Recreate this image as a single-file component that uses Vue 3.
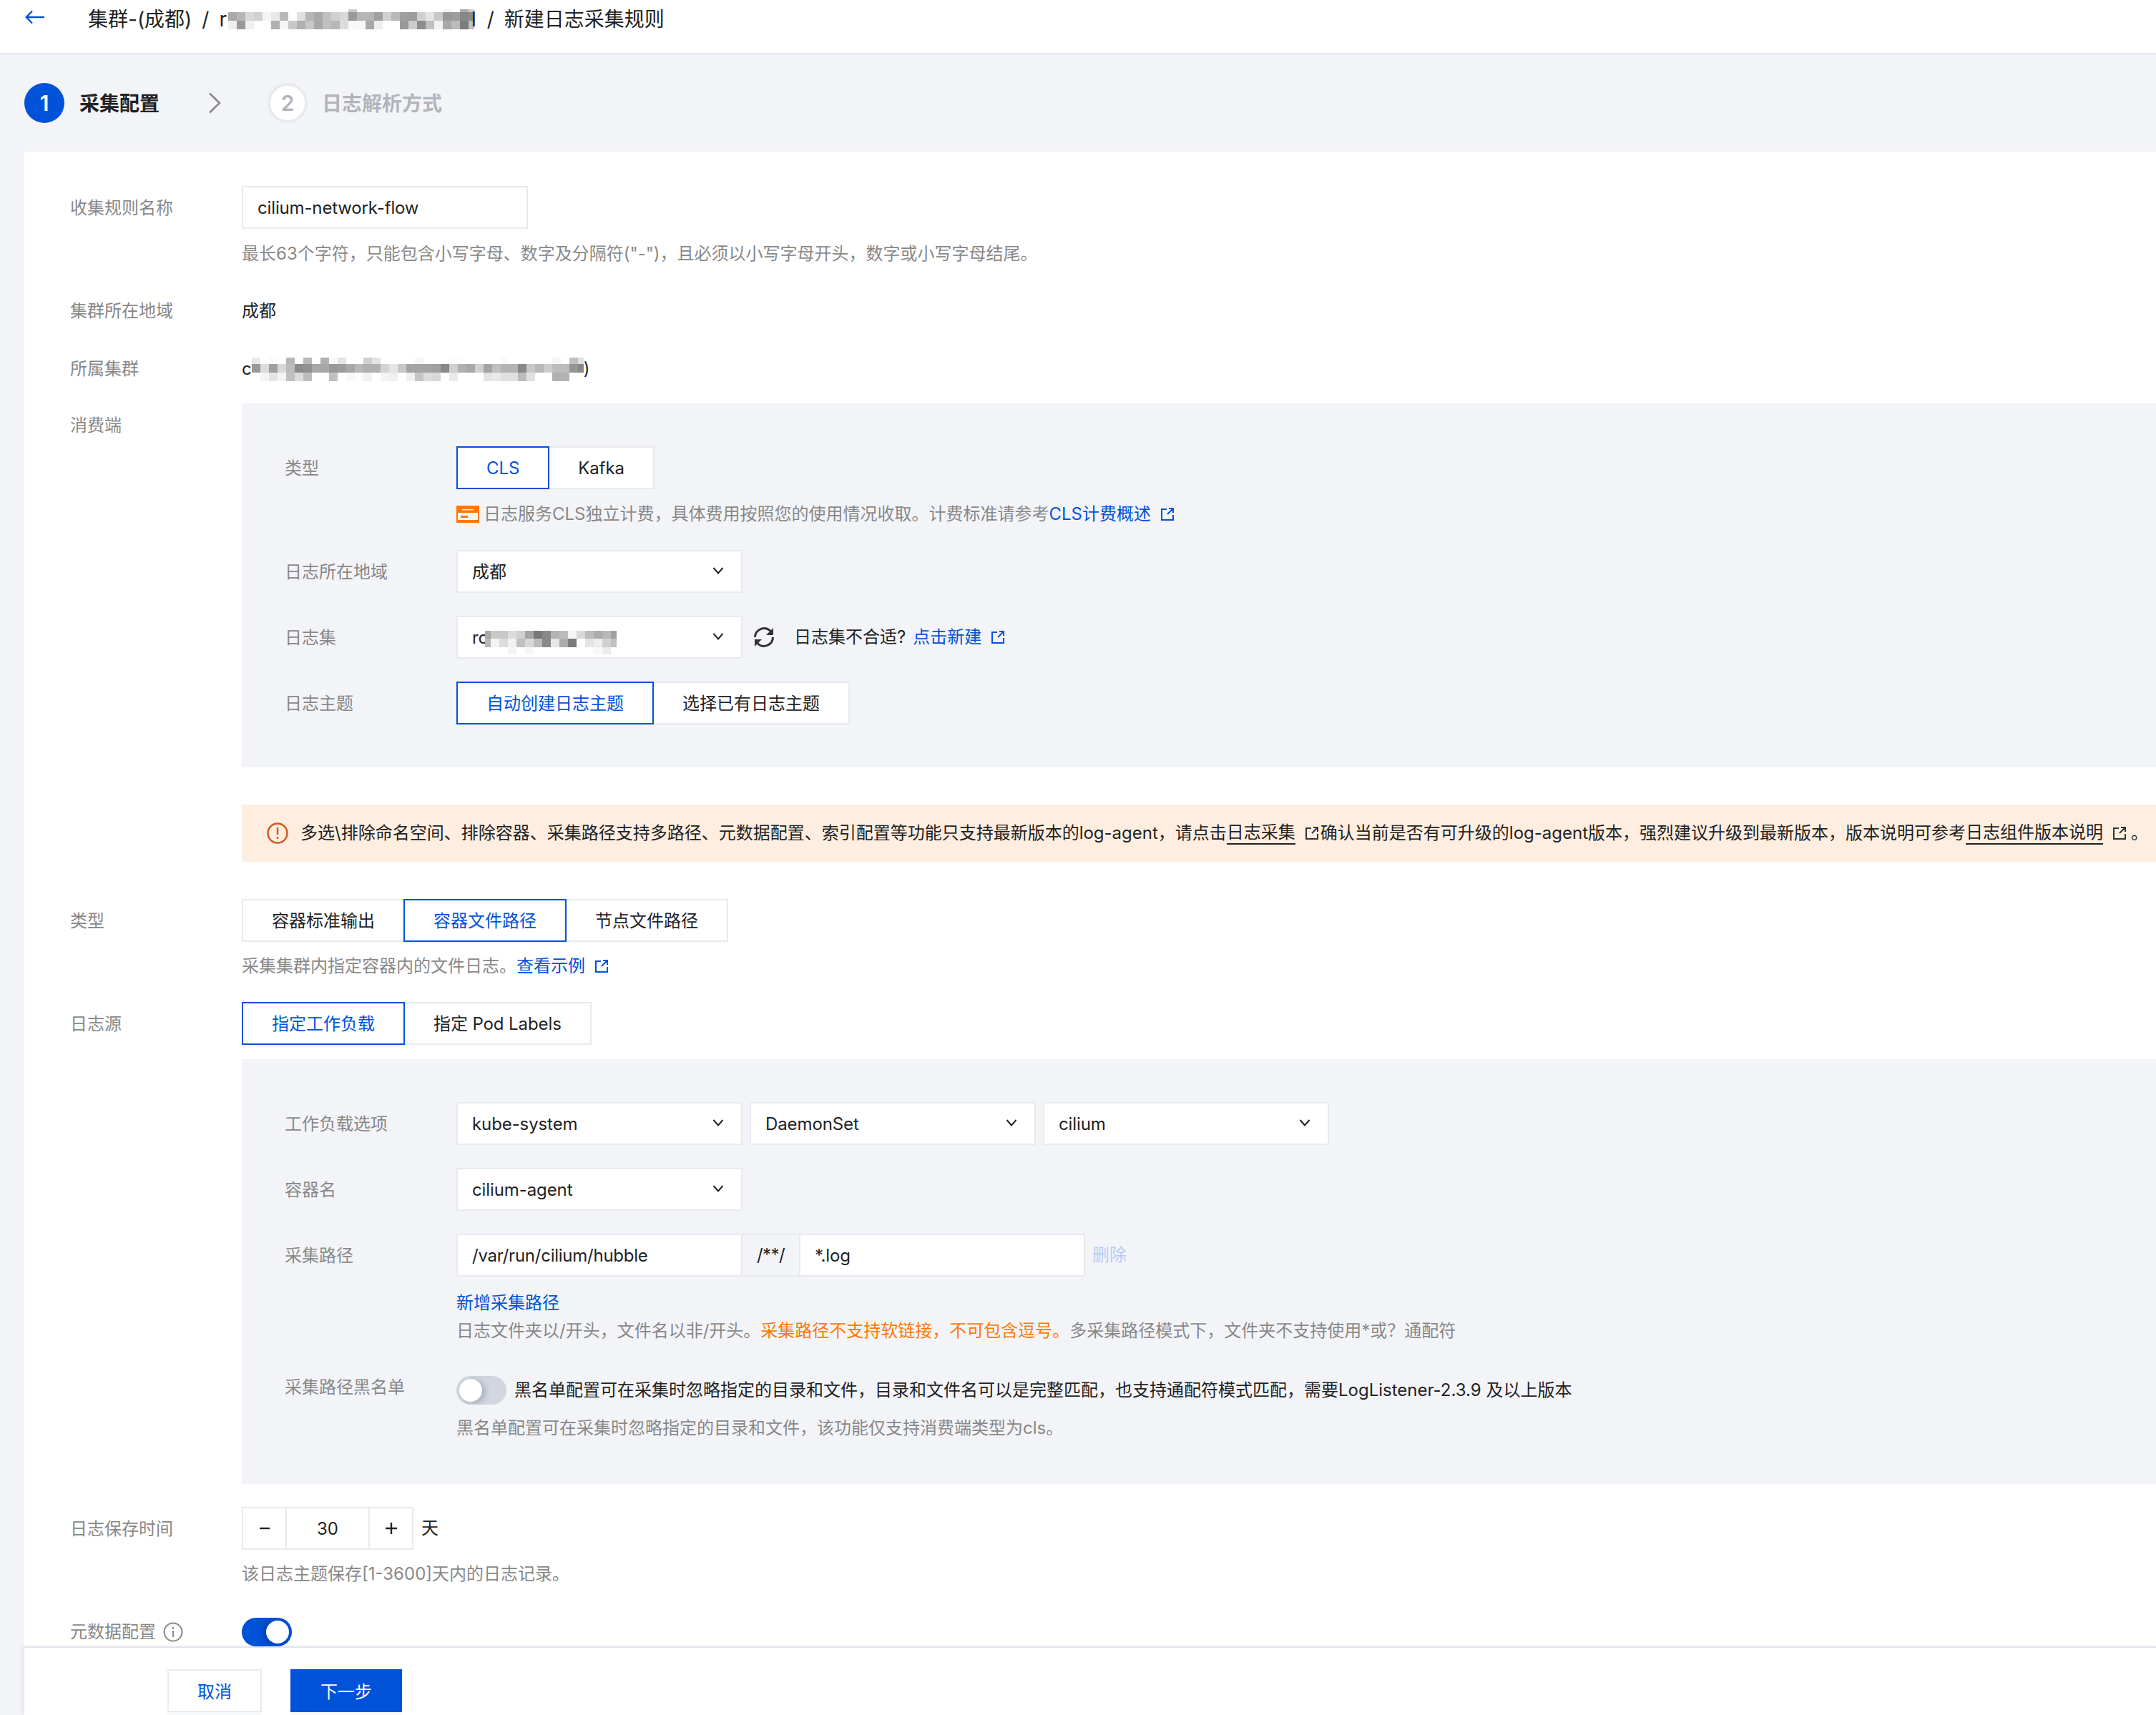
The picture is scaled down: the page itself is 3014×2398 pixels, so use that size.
<script setup>
function build(rows, cell) {
  const out = []
  let y = 0
  rows.forEach((r) => {
    r.v.split(' ').forEach((g, i) => {
      if (g !== 'ff') out.push({ x: i * cell + (r.x || 0), y, w: cell, h: r.h, fill: '#' + g + g + g })
    })
    y += r.h
  })
  return out
}
const headMosaic = build([
  { h: 4, v: 'ff ff ff ff ff ff ff ff ff ff ff ff ff ff c8 ff ff ff ff ff ff ff ff ff ff f4 ff aa cc' },
  { h: 12, v: 'aa b5 d8 d0 f5 e8 b8 ff e0 b5 a8 c0 d0 d8 99 b5 b5 a0 d0 b8 a0 9c d0 e4 c8 99 9c 88 8a' },
  { h: 12, v: 'ee 99 f0 ff ff b0 f5 c8 b0 c8 a8 c0 b8 dc f8 f8 a8 ee ff ff 99 cc 8c c0 f2 a8 bc 7c c0' }
], 12)
const clusterMosaic = build([
  { h: 9, v: 'e8 ff fa ff b8 ff b8 ff b0 fa e4 ff ff d0 e4 ff ff ff ff f6 ff ff ff fc fc ff ff ff ff fa ff ff ff ff ff f4 ff c0 e0' },
  { h: 12, v: '99 dc a0 d8 bc 8c 90 a8 a8 98 9c a8 b8 b0 b0 d4 e4 c8 a4 a4 a4 a0 88 d0 b0 a8 d0 a4 c0 b4 b4 88 c8 b8 cc bc bc 94 88' },
  { h: 12, v: 'ff f4 e4 f4 c0 dc bc ff ff c0 ff f8 fc f2 ff f4 f0 ff f0 c4 dc d8 ff ea ff ff ff e4 e8 e0 e0 bc e0 ff ff b0 b4 ff ff' }
], 12)
const setMosaic = build([
  { h: 11, x: -4, v: 'a8 c8 c8 dc d0 a4 78 88 b4 bc f4 d8 bc ac b8 a0' },
  { h: 12, x: -4, v: 'b8 f4 dc f2 c0 d8 bc 88 e8 ac 7c ff e4 ee d0 c0' },
  { h: 10, x: -4, v: 'ff ff ff f4 ff f6 ff ff ff ff ff ff ff f8 ec ff' }
], 12)
</script>

<template>
  <div class="page">
    <div class="main">
      <header class="topbar">
        <svg class="back" width="28" height="20" viewBox="0 0 28 20" fill="none" stroke="#0052d9" stroke-width="2.4">
          <path d="M27 10H2M10 1.5 1.8 10l8.2 8.5" />
        </svg>
        <nav class="crumbs">
          <span>集群-(成都)</span>
          <span class="sep">/</span>
          <span class="crumb-r">r</span>
          <svg class="mosaic" width="344" height="28" viewBox="0 0 344 28">
            <rect v-for="(c, i) in headMosaic" :key="i" :x="c.x" :y="c.y" :width="c.w" :height="c.h" :fill="c.fill" />
          </svg>
          <span class="tail">l</span>
          <span class="sep sep2">/</span>
          <span>新建日志采集规则</span>
        </nav>
      </header>

      <div class="steps">
        <div class="dot dot-on">1</div>
        <div class="step-name">采集配置</div>
        <svg class="step-arrow" width="18" height="30" viewBox="0 0 18 30" fill="none" stroke="#888" stroke-width="2.6">
          <path d="M2 1.5 16 15 2 28.5" />
        </svg>
        <div class="dot dot-off">2</div>
        <div class="step-name step-name-off">日志解析方式</div>
      </div>

      <section class="card">
        <div class="row">
          <div class="label">收集规则名称</div>
          <div class="field">
            <div class="input wide">cilium-network-flow</div>
            <div class="help h-first">最长63个字符，只能包含小写字母、数字及分隔符("-")，且必须以小写字母开头，数字或小写字母结尾。</div>
          </div>
        </div>

        <div class="row row-text m44">
          <div class="label">集群所在地域</div>
          <div class="field">成都</div>
        </div>

        <div class="row row-text m45">
          <div class="label">所属集群</div>
          <div class="field inline">
            <span>c</span>
            <svg class="mosaic" width="464" height="33" viewBox="0 0 464 33">
              <rect v-for="(c, i) in clusterMosaic" :key="i" :x="c.x" :y="c.y" :width="c.w" :height="c.h" :fill="c.fill" />
            </svg>
            <span>)</span>
          </div>
        </div>

        <div class="row m30">
          <div class="label">消费端</div>
          <div class="field">
            <div class="panel">
              <div class="row">
                <div class="label">类型</div>
                <div class="field">
                  <div class="seg">
                    <div class="seg-btn on latin">CLS</div>
                    <div class="seg-btn latin">Kafka</div>
                  </div>
                  <div class="help h-bill inline">
                    <svg class="bill" width="32" height="24" viewBox="0 0 32 24">
                      <rect width="32" height="24" fill="#ff7800" />
                      <rect x="8" y="5" width="16" height="1.4" fill="#f3f4f8" />
                      <rect x="2" y="10" width="28" height="10" fill="#f3f4f8" />
                      <rect x="6" y="14" width="10" height="3" fill="#ff7800" />
                    </svg>
                    <span>日志服务CLS独立计费，具体费用按照您的使用情况收取。计费标准请参考</span>
                    <a class="link">CLS计费概述</a>
                    <svg class="ext" width="18" height="18" viewBox="0 0 18 18" fill="none" stroke="#0052d9" stroke-width="2">
                      <path d="M8 2H1v15h16v-7M9 9l7-7M11 1h6v6" />
                    </svg>
                  </div>
                </div>
              </div>
              <div class="row m32">
                <div class="label">日志所在地域</div>
                <div class="select">
                  <span>成都</span>
                  <svg class="chev" width="16" height="10" viewBox="0 0 16 10" fill="none" stroke="#222" stroke-width="2"><path d="M1.5 1 8 8.5 14.5 1" /></svg>
                </div>
              </div>
              <div class="row m32">
                <div class="label">日志集</div>
                <div class="field inline">
                  <div class="select">
                    <span class="set-name">
                      <span class="set-head">rc</span>
                      <svg class="mosaic set" width="184" height="33" viewBox="0 0 184 33">
                        <rect v-for="(c, i) in setMosaic" :key="i" :x="c.x" :y="c.y" :width="c.w" :height="c.h" :fill="c.fill" />
                      </svg>
                    </span>
                    <svg class="chev" width="16" height="10" viewBox="0 0 16 10" fill="none" stroke="#222" stroke-width="2"><path d="M1.5 1 8 8.5 14.5 1" /></svg>
                  </div>
                  <svg class="refresh" width="30" height="30" viewBox="0 0 30 30" fill="none" stroke="#333" stroke-width="3">
                    <path d="M2.500 15A12.500 12.500 0 0 1 24 6.500" />
                    <path d="M27.500 15A12.500 12.500 0 0 1 6 23.500" />
                    <path d="M28 2v10H18z" fill="#333" stroke="none" />
                    <path d="M2 28V18h10z" fill="#333" stroke="none" />
                  </svg>
                  <span class="not-fit">日志集不合适?</span>
                  <a class="link fit-link">点击新建</a>
                  <svg class="ext" width="18" height="18" viewBox="0 0 18 18" fill="none" stroke="#0052d9" stroke-width="2">
                    <path d="M8 2H1v15h16v-7M9 9l7-7M11 1h6v6" />
                  </svg>
                </div>
              </div>
              <div class="row m32">
                <div class="label">日志主题</div>
                <div class="seg">
                  <div class="seg-btn on">自动创建日志主题</div>
                  <div class="seg-btn">选择已有日志主题</div>
                </div>
              </div>
            </div>

            <div class="banner">
              <svg class="warn" width="30" height="30" viewBox="0 0 30 30" fill="none" stroke="#d4561c" stroke-width="2.4">
                <circle cx="15" cy="15" r="13.500" />
                <path d="M15 7v10M15 20v3" />
              </svg>
              <span>多选\排除命名空间、排除容器、采集路径支持多路径、元数据配置、索引配置等功能只支持最新版本的log-agent，请点击</span>
              <a class="under">日志采集</a>
              <svg class="ext-dark" width="18" height="18" viewBox="0 0 18 18" fill="none" stroke="#333" stroke-width="2">
                <path d="M8 2H1v15h16v-7M9 9l7-7M11 1h6v6" />
              </svg>
              <span>确认当前是否有可升级的log-agent版本，强烈建议升级到最新版本，版本说明可参考</span>
              <a class="under">日志组件版本说明</a>
              <svg class="ext-dark" width="18" height="18" viewBox="0 0 18 18" fill="none" stroke="#333" stroke-width="2">
                <path d="M8 2H1v15h16v-7M9 9l7-7M11 1h6v6" />
              </svg>
              <span class="stop">。</span>
            </div>
          </div>
        </div>

        <div class="row m52">
          <div class="label">类型</div>
          <div class="field">
            <div class="seg">
              <div class="seg-btn">容器标准输出</div>
              <div class="seg-btn on">容器文件路径</div>
              <div class="seg-btn">节点文件路径</div>
            </div>
            <div class="help h-note inline">
              <span>采集集群内指定容器内的文件日志。</span>
              <a class="link">查看示例</a>
              <svg class="ext" width="18" height="18" viewBox="0 0 18 18" fill="none" stroke="#0052d9" stroke-width="2">
                <path d="M8 2H1v15h16v-7M9 9l7-7M11 1h6v6" />
              </svg>
            </div>
          </div>
        </div>

        <div class="row m32">
          <div class="label">日志源</div>
          <div class="field">
            <div class="seg">
              <div class="seg-btn on">指定工作负载</div>
              <div class="seg-btn latin">指定 Pod Labels</div>
            </div>
            <div class="panel p2">
              <div class="row">
                <div class="label">工作负载选项</div>
                <div class="inline g10">
                  <div class="select">
                    <span>kube-system</span>
                    <svg class="chev" width="16" height="10" viewBox="0 0 16 10" fill="none" stroke="#222" stroke-width="2"><path d="M1.5 1 8 8.5 14.5 1" /></svg>
                  </div>
                  <div class="select">
                    <span>DaemonSet</span>
                    <svg class="chev" width="16" height="10" viewBox="0 0 16 10" fill="none" stroke="#222" stroke-width="2"><path d="M1.5 1 8 8.5 14.5 1" /></svg>
                  </div>
                  <div class="select">
                    <span>cilium</span>
                    <svg class="chev" width="16" height="10" viewBox="0 0 16 10" fill="none" stroke="#222" stroke-width="2"><path d="M1.5 1 8 8.5 14.5 1" /></svg>
                  </div>
                </div>
              </div>
              <div class="row m32">
                <div class="label">容器名</div>
                <div class="select">
                  <span>cilium-agent</span>
                  <svg class="chev" width="16" height="10" viewBox="0 0 16 10" fill="none" stroke="#222" stroke-width="2"><path d="M1.5 1 8 8.5 14.5 1" /></svg>
                </div>
              </div>
              <div class="row m32">
                <div class="label">采集路径</div>
                <div class="field">
                  <div class="inline">
                    <div class="input wide path">/var/run/cilium/hubble</div>
                    <div class="addon">/**/</div>
                    <div class="input wide">*.log</div>
                    <span class="del">删除</span>
                  </div>
                  <div class="add"><a class="link">新增采集路径</a></div>
                  <div class="help h-tight">日志文件夹以/开头，文件名以非/开头。<span class="warn-text">采集路径不支持软链接，不可包含逗号。</span>多采集路径模式下，文件夹不支持使用*或？通配符</div>
                </div>
              </div>
              <div class="row m44">
                <div class="label lbl-plain">采集路径黑名单</div>
                <div class="field">
                  <div class="inline sw-row">
                    <div class="switch"><i class="knob"></i></div>
                    <span class="sw-text">黑名单配置可在采集时忽略指定的目录和文件，目录和文件名可以是完整匹配，也支持通配符模式匹配，需要LogListener-2.3.9 及以上版本</span>
                  </div>
                  <div class="help h-sw">黑名单配置可在采集时忽略指定的目录和文件，该功能仅支持消费端类型为cls。</div>
                </div>
              </div>
            </div>
          </div>
        </div>

        <div class="row m32">
          <div class="label">日志保存时间</div>
          <div class="field">
            <div class="inline">
              <div class="stepper">
                <div class="st-btn">
                  <svg width="16" height="16" viewBox="0 0 16 16" stroke="#222" stroke-width="2.400"><path d="M1 8h14" /></svg>
                </div>
                <div class="st-val">30</div>
                <div class="st-btn">
                  <svg width="16" height="16" viewBox="0 0 16 16" stroke="#222" stroke-width="2.400"><path d="M0 8h16M8 0v16" /></svg>
                </div>
              </div>
              <span class="unit">天</span>
            </div>
            <div class="help h-note">该日志主题保存[1-3600]天内的日志记录。</div>
          </div>
        </div>

        <div class="row row-meta">
          <div class="label inline">
            <span>元数据配置</span>
            <svg class="info" width="28" height="28" viewBox="0 0 28 28" fill="none" stroke="#888" stroke-width="2">
              <circle cx="14" cy="14" r="12.500" />
              <path d="M14 12v9M14 7v3" />
            </svg>
          </div>
          <div class="switch switch-on"><i class="knob"></i></div>
        </div>
      </section>
    </div>

    <footer class="footer">
      <button class="btn btn-ghost">取消</button>
      <button class="btn btn-primary">下一步</button>
    </footer>
  </div>
</template>

<style>
html, body { margin: 0; background: #f3f4f8; }
</style>

<style scoped>
.page {
  width: 3014px;
  height: 2398px;
  display: flex;
  flex-direction: column;
  overflow: hidden;
  background: #f3f4f8;
  color: #222;
  font-family: Inter, "Noto Sans CJK SC", sans-serif;
  font-size: 24px;
  line-height: 36px;
}
.main { flex: 1; min-height: 0; overflow: hidden; }
.topbar {
  height: 74px;
  background: #fff;
  border-bottom: 2px solid #e8eaef;
  display: flex;
  align-items: flex-start;
  padding-left: 35px;
}
.back { margin-top: 14px; flex: none; }
.crumbs {
  display: flex;
  align-items: center;
  height: 54px;
  margin-left: 60px;
  font-size: 28px;
  line-height: 54px;
  color: #222;
}
.sep { margin: 0 14px; }
.sep2 { margin: 0 14px 0 15px; }
.crumb-r { margin-right: 2px; }
.mosaic { display: block; flex: none; }
.tail { margin-left: -4px; }

.steps {
  height: 136px;
  display: flex;
  align-items: center;
  padding-left: 34px;
}
.dot {
  width: 56px;
  height: 56px;
  box-sizing: border-box;
  border-radius: 50%;
  display: flex;
  align-items: center;
  justify-content: center;
  font-size: 30px;
  font-weight: 600;
}
.dot-on { background: #0052d9; color: #fff; }
.dot-off { background: #fff; border: 4px solid #e8eaf0; color: #b2b5bb; margin-left: 65px; }
.step-name { font-size: 28px; font-weight: 700; color: #222; margin-left: 21px; padding-top: 2px; }
.step-name-off { color: #b2b5bb; margin-left: 20px; }
.step-arrow { margin-left: 68px; }

.card { background: #fff; margin-left: 34px; padding: 48px 0 60px 64px; }
.row { display: flex; align-items: flex-start; }
.label { width: 240px; height: 60px; flex: none; line-height: 62px; color: #888; }
.field { flex: 1; min-width: 0; }
.inline { display: flex; align-items: center; }
.row-text .label { line-height: 36px; height: 36px; }
.row-text .field { height: 36px; }
.lbl-plain { line-height: 36px; height: 36px; margin-top: -1px; }
.m30 { margin-top: 30px; }
.m32 { margin-top: 32px; }
.m44 { margin-top: 44px; }
.m45 { margin-top: 45px; }
.m52 { margin-top: 52px; }
.g10 { gap: 10px; }

.input {
  height: 60px;
  box-sizing: border-box;
  background: #fff;
  border: 2px solid #e8eaf0;
  padding: 0 20px;
  line-height: 58px;
  white-space: nowrap;
  letter-spacing: -0.15px;
}
.path { letter-spacing: -0.25px; }
.wide { width: 400px; flex: none; }
.addon {
  width: 79px;
  height: 60px;
  box-sizing: border-box;
  padding-left: 20px;
  border-top: 2px solid #e8eaf0;
  border-bottom: 2px solid #e8eaf0;
  line-height: 56px;
  flex: none;
  letter-spacing: -0.6px;
}
.del { color: #b5cdf5; margin-left: 10px; }
.help { color: #888; white-space: nowrap; }
.h-first { margin-top: 17px; }
.h-note { margin-top: 16px; }
.h-bill { margin-top: 17px; }
.h-tight { margin-top: 3px; }
.h-sw { margin-top: 15px; }
.add { margin-top: 19px; }
.link { color: #0052d9; text-decoration: none; }
.ext { margin-left: 14px; flex: none; }
.bill { margin-right: 6px; flex: none; }
.warn-text { color: #ff7800; }

.panel { background: #f3f4f8; padding: 60px 0 60px 60px; }
.p2 { margin-top: 20px; }

.seg { display: flex; }
.seg-btn {
  height: 60px;
  box-sizing: border-box;
  padding: 0 40px;
  margin-left: -2px;
  background: #fff;
  border: 2px solid #e8eaf0;
  line-height: 58px;
  white-space: nowrap;
}
.seg-btn.latin { letter-spacing: -0.1px; }
.seg-btn:first-child { margin-left: 0; }
.seg-btn.on { border-color: #0052d9; color: #0052d9; position: relative; z-index: 1; }

.select {
  width: 400px;
  height: 60px;
  box-sizing: border-box;
  flex: none;
  background: #fff;
  border: 2px solid #e8eaf0;
  padding: 2px 24px 0 20px;
  display: flex;
  align-items: center;
  justify-content: space-between;
  white-space: nowrap;
  letter-spacing: -0.1px;
}
.chev { flex: none; margin-top: -4px; }
.set-name { display: flex; align-items: center; }
.set-head { width: 18px; }
.set { margin-top: 13px; position: relative; }
.refresh { margin-left: 15px; flex: none; }
.not-fit { margin-left: 27px; }
.fit-link { margin-left: 10px; }

.banner {
  height: 80px;
  margin-top: 52px;
  background: #ffeee0;
  padding-left: 35px;
  display: flex;
  align-items: center;
  white-space: nowrap;
}
.warn { flex: none; margin-right: 17px; }
.under { border-bottom: 2px solid #222; line-height: 30px; }
.ext-dark { margin: 0 3px 0 14px; flex: none; }
.stop { margin-left: 4px; }

.switch {
  width: 70px;
  height: 40px;
  flex: none;
  border-radius: 20px;
  background: #d2d7df;
  position: relative;
  overflow: hidden;
}
.knob {
  position: absolute;
  left: 4px;
  top: 4px;
  width: 32px;
  height: 32px;
  border-radius: 50%;
  background: #fff;
  box-shadow: 4px 2px 8px rgba(40, 50, 70, 0.28);
}
.switch-on { background: #0052d9; }
.switch-on .knob { left: 34px; box-shadow: -4px 2px 8px rgba(0, 20, 80, 0.3); }
.sw-row { height: 40px; margin-top: 1px; }
.sw-text { margin-left: 11px; white-space: nowrap; }

.stepper {
  display: flex;
  width: 240px;
  height: 60px;
  box-sizing: border-box;
  background: #fff;
  border: 2px solid #e8eaf0;
}
.st-btn {
  width: 59px;
  flex: none;
  display: flex;
  align-items: center;
  justify-content: center;
}
.st-val {
  flex: 1;
  text-align: center;
  line-height: 58px;
  border-left: 2px solid #e8eaf0;
  border-right: 2px solid #e8eaf0;
}
.unit { margin-left: 11px; }
.row-meta { margin-top: 43px; }
.row-meta .label { line-height: 36px; height: 36px; margin-top: 2px; }
.info { margin-left: 10px; }

.footer {
  height: 96px;
  box-sizing: border-box;
  flex: none;
  margin-left: 34px;
  background: #fff;
  border-top: 2px solid #e0e4ea;
  padding: 30px 0 0 200px;
  display: flex;
  align-items: flex-start;
  gap: 40px;
  box-shadow: -3px 0 6px rgba(0, 0, 0, 0.06);
}
.btn {
  height: 60px;
  box-sizing: border-box;
  padding: 2px 40px 0;
  font: inherit;
  line-height: 56px;
  border: 2px solid #e8eaf0;
  background: #fff;
  box-shadow: 0 5px 0 #f8f9fb;
}
.btn-ghost { color: #0052d9; }
.btn-primary { background: #0052d9; border-color: #0052d9; color: #fff; }
</style>
